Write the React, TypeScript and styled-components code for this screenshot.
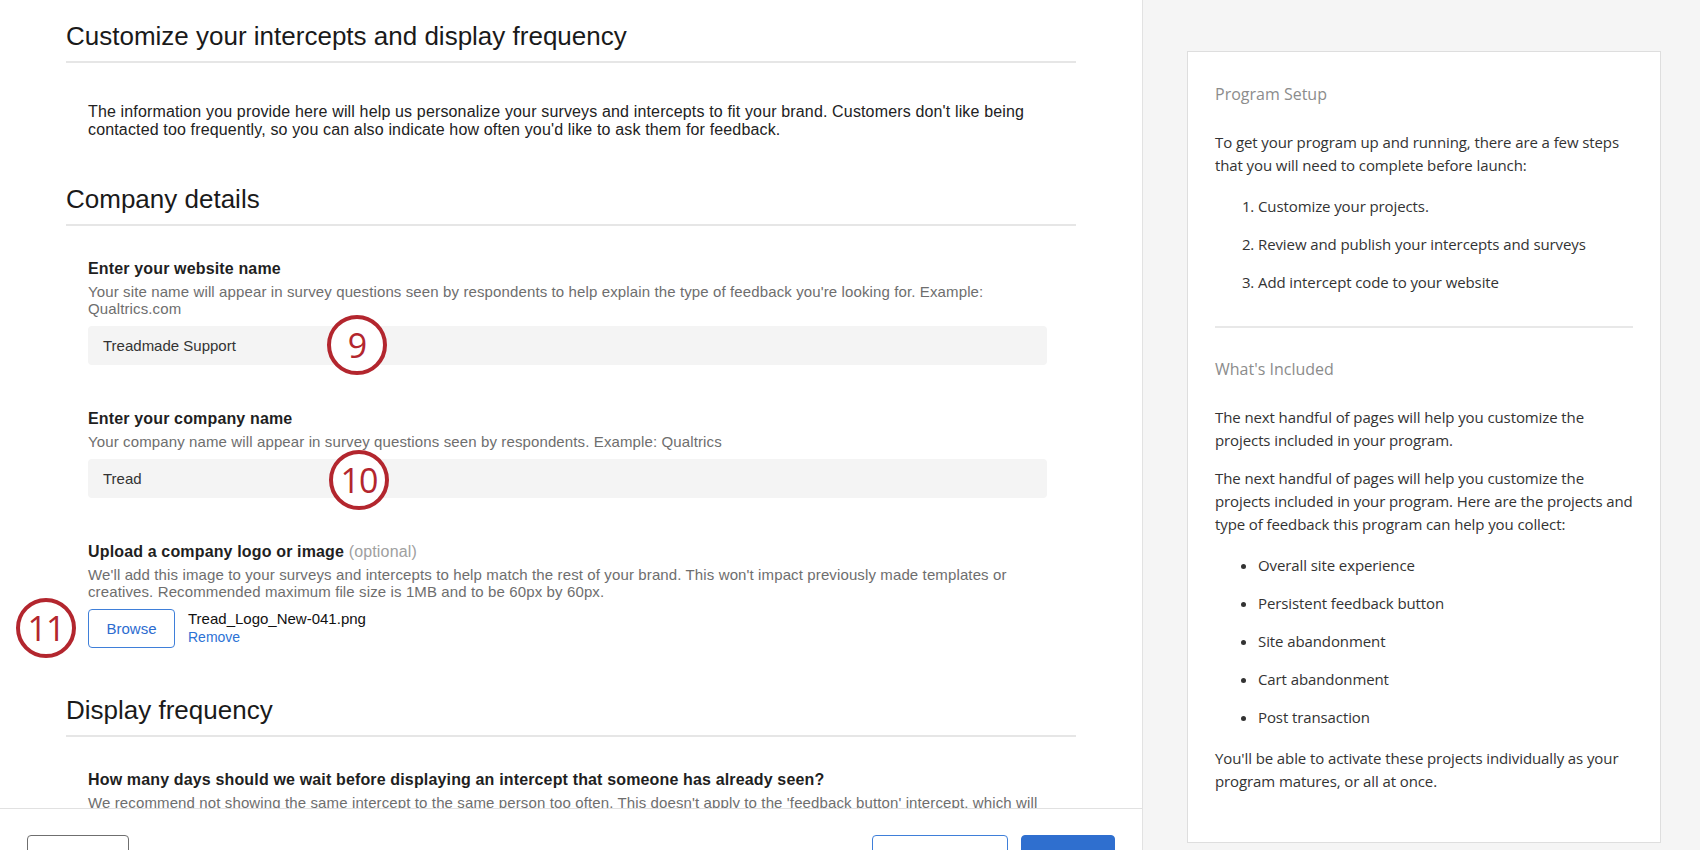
import React from "react";
import styled, { createGlobalStyle } from "styled-components";
import { ChevronLeft } from "lucide-react";

const GlobalStyle = createGlobalStyle`
  html, body { margin: 0; padding: 0; background: #ffffff; }
  body { font-family: "Liberation Sans", Arial, sans-serif; color: #1d1d1d; }
  * { box-sizing: border-box; }
`;

const Page = styled.div`
  display: flex;
  height: 850px;
  overflow: hidden;
`;

const MainColumn = styled.div`
  width: 1142px;
  flex-shrink: 0;
  display: flex;
  flex-direction: column;
  overflow: hidden;
`;

const ScrollArea = styled.div`
  flex: 0 0 808px;
  overflow: hidden;
  padding: 21px 66px 0 66px;
`;

const SectionTitle = styled.h2<{ $top?: number }>`
  margin: ${(p) => p.$top ?? 0}px 0 0 0;
  padding-bottom: 10px;
  border-bottom: 2px solid #e6e6e6;
  font-size: 26px;
  line-height: 30px;
  font-weight: 400;
  color: #1a1a1a;
`;

const Intro = styled.p`
  margin: 40px 29px 0 22px;
  font-size: 16px;
  line-height: 18px;
  letter-spacing: 0.15px;
  color: #222222;
`;

const FieldList = styled.div<{ $top: number }>`
  display: flex;
  flex-direction: column;
  gap: 44px;
  padding: ${(p) => p.$top}px 29px 0 22px;
`;

const Field = styled.div`
  display: flex;
  flex-direction: column;
`;

const Label = styled.div`
  font-size: 16px;
  line-height: 20px;
  font-weight: 700;
  letter-spacing: 0.15px;
  color: #1f1f1f;
`;

const Optional = styled.span`
  font-weight: 400;
  color: #a0a0a0;
`;

const Description = styled.div`
  margin-top: 4px;
  font-size: 15px;
  line-height: 17px;
  letter-spacing: 0.12px;
  color: #6e6e6e;
`;

const ControlRow = styled.div`
  position: relative;
  margin-top: 9px;
  display: flex;
  align-items: flex-start;
  gap: 13px;
`;

const TextInput = styled.div`
  flex: 1;
  height: 39px;
  display: flex;
  align-items: center;
  padding: 0 15px;
  background: #f4f4f4;
  border-radius: 4px;
  font-size: 15px;
  color: #333333;
`;

const BrowseButton = styled.button`
  width: 87px;
  height: 39px;
  border: 1px solid #3f7fd9;
  border-radius: 4px;
  background: #ffffff;
  color: #2c6ccf;
  font-family: inherit;
  font-size: 15px;
  padding: 0;
`;

const FileInfo = styled.div`
  display: flex;
  flex-direction: column;
  padding-top: 1px;
`;

const FileName = styled.div`
  font-size: 15px;
  line-height: 18px;
  color: #111111;
`;

const RemoveLink = styled.a`
  font-size: 14px;
  line-height: 18px;
  color: #2c72d5;
  text-decoration: none;
`;

const Badge = styled.div<{ $left: number; $top: number }>`
  position: absolute;
  left: ${(p) => p.$left}px;
  top: ${(p) => p.$top}px;
  width: 60px;
  height: 60px;
  border-radius: 50%;
  border: 4px solid #b3262e;
  background: #ffffff;
  color: #b3262e;
  display: flex;
  align-items: center;
  justify-content: center;
  font-family: "Open Sans", sans-serif;
  font-size: 34px;
  font-weight: 400;
  line-height: 1;
  letter-spacing: -1px;
`;

const Footer = styled.div`
  flex-shrink: 0;
  border-top: 1px solid #e1e1e1;
  padding: 26px 27px;
  display: flex;
  justify-content: space-between;
  align-items: flex-start;
`;

const FooterGroup = styled.div`
  display: flex;
  gap: 13px;
`;

const FooterButton = styled.button<{ $variant: "back" | "outline" | "primary"; $width: number }>`
  width: ${(p) => p.$width}px;
  height: 40px;
  border-radius: 4px;
  font-family: inherit;
  font-size: 15px;
  display: flex;
  align-items: center;
  justify-content: center;
  gap: 6px;
  padding: 0;
  border: 1px solid
    ${(p) => (p.$variant === "back" ? "#6f6f6f" : p.$variant === "outline" ? "#3f7fd9" : "#2f6fcf")};
  background: ${(p) => (p.$variant === "primary" ? "#2f6fcf" : "#ffffff")};
  color: ${(p) => (p.$variant === "back" ? "#333333" : p.$variant === "outline" ? "#2c6ccf" : "#ffffff")};
`;

const SidePanel = styled.aside`
  flex: 1;
  background: #f5f5f5;
  border-left: 1px solid #e2e2e2;
  padding: 51px 39px 0 44px;
`;

const Card = styled.div`
  height: 792px;
  background: #ffffff;
  border: 1px solid #dedede;
  padding: 31px 24px 0 27px;
  font-family: "Open Sans", sans-serif;
  font-size: 15px;
  line-height: 23px;
  letter-spacing: -0.1px;
  color: #333333;
`;

const CardHeading = styled.div`
  font-size: 16px;
  line-height: 22px;
  letter-spacing: 0;
  color: #8c8c8c;
`;

const CardText = styled.p<{ $top: number }>`
  margin: ${(p) => p.$top}px 0 0 0;
`;

const CardList = styled.ul`
  margin: 18px 0 0 0;
  padding-left: 43px;
  display: flex;
  flex-direction: column;
  gap: 15px;
`;

const NumberedList = styled(CardList).attrs({ as: "ol" })``;

const Divider = styled.hr`
  margin: 32px 3px 30px 0;
  border: none;
  border-top: 2px solid #e8e8e8;
`;

export default function App() {
  return (
    <>
      <GlobalStyle />
      <Page>
        <MainColumn>
          <ScrollArea>
            <SectionTitle>Customize your intercepts and display frequency</SectionTitle>
            <Intro>
              The information you provide here will help us personalize your surveys and intercepts to fit your
              brand. Customers don't like being contacted too frequently, so you can also indicate how often you'd
              like to ask them for feedback.
            </Intro>

            <SectionTitle $top={45}>Company details</SectionTitle>
            <FieldList $top={33}>
              <Field>
                <Label>Enter your website name</Label>
                <Description>
                  Your site name will appear in survey questions seen by respondents to help explain the type of
                  feedback you're looking for. Example: Qualtrics.com
                </Description>
                <ControlRow>
                  <TextInput>Treadmade Support</TextInput>
                  <Badge $left={239} $top={-11}>9</Badge>
                </ControlRow>
              </Field>
              <Field>
                <Label>Enter your company name</Label>
                <Description>
                  Your company name will appear in survey questions seen by respondents. Example: Qualtrics
                </Description>
                <ControlRow>
                  <TextInput>Tread</TextInput>
                  <Badge $left={241} $top={-9}>10</Badge>
                </ControlRow>
              </Field>
              <Field>
                <Label>
                  Upload a company logo or image <Optional>(optional)</Optional>
                </Label>
                <Description>
                  We'll add this image to your surveys and intercepts to help match the rest of your brand. This
                  won't impact previously made templates or creatives. Recommended maximum file size is 1MB and to be
                  60px by 60px.
                </Description>
                <ControlRow>
                  <Badge $left={-72} $top={-11}>11</Badge>
                  <BrowseButton>Browse</BrowseButton>
                  <FileInfo>
                    <FileName>Tread_Logo_New-041.png</FileName>
                    <RemoveLink href="#">Remove</RemoveLink>
                  </FileInfo>
                </ControlRow>
              </Field>
            </FieldList>

            <SectionTitle $top={47}>Display frequency</SectionTitle>
            <FieldList $top={33}>
              <Field>
                <Label>How many days should we wait before displaying an intercept that someone has already seen?</Label>
                <Description>
                  We recommend not showing the same intercept to the same person too often. This doesn't apply to the
                  'feedback button' intercept, which will always be available to visitors.
                </Description>
              </Field>
            </FieldList>
          </ScrollArea>
          <Footer>
            <FooterButton $variant="back" $width={102}>
              <ChevronLeft size={18} strokeWidth={1.5} />
              Back
            </FooterButton>
            <FooterGroup>
              <FooterButton $variant="outline" $width={136}>Save &amp; Close</FooterButton>
              <FooterButton $variant="primary" $width={94}>Next</FooterButton>
            </FooterGroup>
          </Footer>
        </MainColumn>

        <SidePanel>
          <Card>
            <CardHeading>Program Setup</CardHeading>
            <CardText $top={26}>
              To get your program up and running, there are a few steps that you will need to complete before launch:
            </CardText>
            <NumberedList>
              <li>Customize your projects.</li>
              <li>Review and publish your intercepts and surveys</li>
              <li>Add intercept code to your website</li>
            </NumberedList>
            <Divider />
            <CardHeading>What's Included</CardHeading>
            <CardText $top={26}>
              The next handful of pages will help you customize the projects included in your program.
            </CardText>
            <CardText $top={15}>
              The next handful of pages will help you customize the projects included in your program. Here are the
              projects and type of feedback this program can help you collect:
            </CardText>
            <CardList>
              <li>Overall site experience</li>
              <li>Persistent feedback button</li>
              <li>Site abandonment</li>
              <li>Cart abandonment</li>
              <li>Post transaction</li>
            </CardList>
            <CardText $top={18}>
              You'll be able to activate these projects individually as your program matures, or all at once.
            </CardText>
          </Card>
        </SidePanel>
      </Page>
    </>
  );
}
